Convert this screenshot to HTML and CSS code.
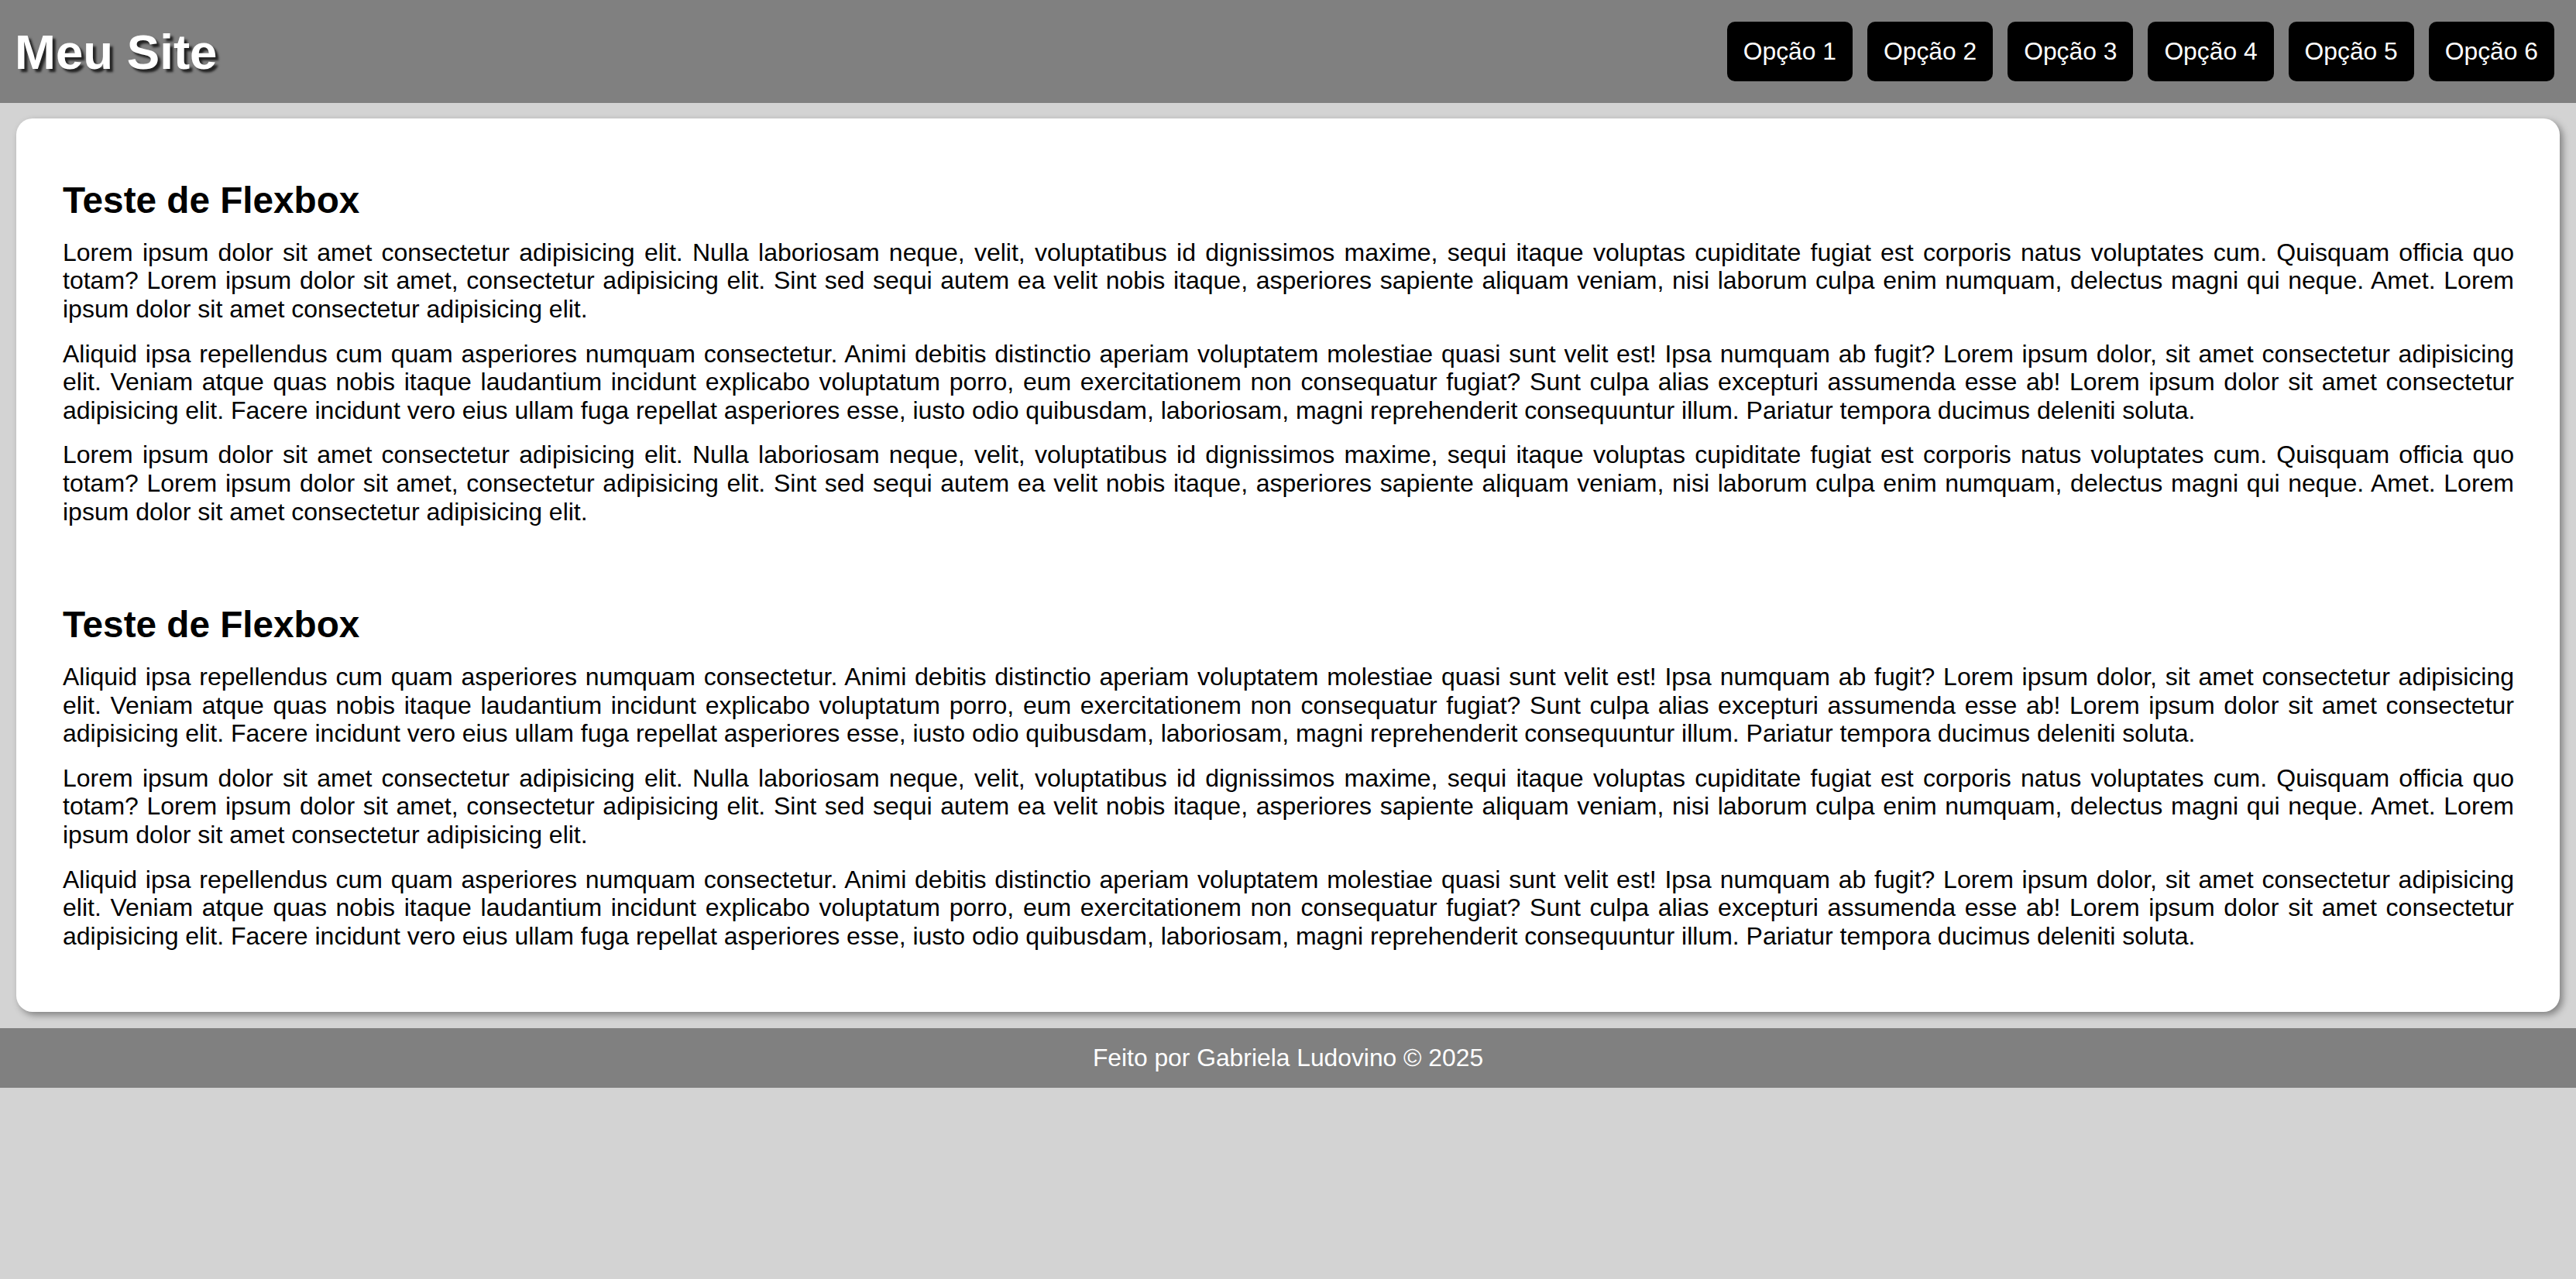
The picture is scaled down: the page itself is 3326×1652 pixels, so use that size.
FILE: index.html
```html
<!DOCTYPE html>
<html lang="pt-BR">
<head>
<meta charset="utf-8">
<title>Meu Site</title>
<link rel="stylesheet" href="styles.css">
</head>
<body>
<header class="topbar">
  <h1 class="logo">Meu Site</h1>
  <nav class="menu">
    <a class="menu-item" href="#">Opção 1</a>
    <a class="menu-item" href="#">Opção 2</a>
    <a class="menu-item" href="#">Opção 3</a>
    <a class="menu-item" href="#">Opção 4</a>
    <a class="menu-item" href="#">Opção 5</a>
    <a class="menu-item" href="#">Opção 6</a>
  </nav>
</header>
<main class="card">
  <section class="block">
    <h2 class="block-title">Teste de Flexbox</h2>
    <p class="text">Lorem ipsum dolor sit amet consectetur adipisicing elit. Nulla laboriosam neque, velit, voluptatibus id dignissimos maxime, sequi itaque voluptas cupiditate fugiat est corporis natus voluptates cum. Quisquam officia quo totam? Lorem ipsum dolor sit amet, consectetur adipisicing elit. Sint sed sequi autem ea velit nobis itaque, asperiores sapiente aliquam veniam, nisi laborum culpa enim numquam, delectus magni qui neque. Amet. Lorem ipsum dolor sit amet consectetur adipisicing elit.</p>
    <p class="text">Aliquid ipsa repellendus cum quam asperiores numquam consectetur. Animi debitis distinctio aperiam voluptatem molestiae quasi sunt velit est! Ipsa numquam ab fugit? Lorem ipsum dolor, sit amet consectetur adipisicing elit. Veniam atque quas nobis itaque laudantium incidunt explicabo voluptatum porro, eum exercitationem non consequatur fugiat? Sunt culpa alias excepturi assumenda esse ab! Lorem ipsum dolor sit amet consectetur adipisicing elit. Facere incidunt vero eius ullam fuga repellat asperiores esse, iusto odio quibusdam, laboriosam, magni reprehenderit consequuntur illum. Pariatur tempora ducimus deleniti soluta.</p>
    <p class="text">Lorem ipsum dolor sit amet consectetur adipisicing elit. Nulla laboriosam neque, velit, voluptatibus id dignissimos maxime, sequi itaque voluptas cupiditate fugiat est corporis natus voluptates cum. Quisquam officia quo totam? Lorem ipsum dolor sit amet, consectetur adipisicing elit. Sint sed sequi autem ea velit nobis itaque, asperiores sapiente aliquam veniam, nisi laborum culpa enim numquam, delectus magni qui neque. Amet. Lorem ipsum dolor sit amet consectetur adipisicing elit.</p>
  </section>
  <section class="block">
    <h2 class="block-title">Teste de Flexbox</h2>
    <p class="text">Aliquid ipsa repellendus cum quam asperiores numquam consectetur. Animi debitis distinctio aperiam voluptatem molestiae quasi sunt velit est! Ipsa numquam ab fugit? Lorem ipsum dolor, sit amet consectetur adipisicing elit. Veniam atque quas nobis itaque laudantium incidunt explicabo voluptatum porro, eum exercitationem non consequatur fugiat? Sunt culpa alias excepturi assumenda esse ab! Lorem ipsum dolor sit amet consectetur adipisicing elit. Facere incidunt vero eius ullam fuga repellat asperiores esse, iusto odio quibusdam, laboriosam, magni reprehenderit consequuntur illum. Pariatur tempora ducimus deleniti soluta.</p>
    <p class="text">Lorem ipsum dolor sit amet consectetur adipisicing elit. Nulla laboriosam neque, velit, voluptatibus id dignissimos maxime, sequi itaque voluptas cupiditate fugiat est corporis natus voluptates cum. Quisquam officia quo totam? Lorem ipsum dolor sit amet, consectetur adipisicing elit. Sint sed sequi autem ea velit nobis itaque, asperiores sapiente aliquam veniam, nisi laborum culpa enim numquam, delectus magni qui neque. Amet. Lorem ipsum dolor sit amet consectetur adipisicing elit.</p>
    <p class="text">Aliquid ipsa repellendus cum quam asperiores numquam consectetur. Animi debitis distinctio aperiam voluptatem molestiae quasi sunt velit est! Ipsa numquam ab fugit? Lorem ipsum dolor, sit amet consectetur adipisicing elit. Veniam atque quas nobis itaque laudantium incidunt explicabo voluptatum porro, eum exercitationem non consequatur fugiat? Sunt culpa alias excepturi assumenda esse ab! Lorem ipsum dolor sit amet consectetur adipisicing elit. Facere incidunt vero eius ullam fuga repellat asperiores esse, iusto odio quibusdam, laboriosam, magni reprehenderit consequuntur illum. Pariatur tempora ducimus deleniti soluta.</p>
  </section>
</main>
<footer class="footer">Feito por Gabriela Ludovino © 2025</footer>
</body>
</html>
```

FILE: styles.css
```css
html, body {
  margin: 0;
  padding: 0;
}

body {
  background: #d3d3d3;
  font-family: "Liberation Sans", Arial, Helvetica, sans-serif;
  font-size: 31.8px;
  color: #000;
  min-height: 1652px;
}

.topbar {
  display: flex;
  align-items: center;
  justify-content: space-between;
  height: 133px;
  box-sizing: border-box;
  padding: 0 28px 0 19px;
  background: #808080;
}

.logo {
  margin: 0;
  font-size: 63.6px;
  font-weight: bold;
  line-height: 1.149;
  color: #fff;
  text-shadow: 4px 4px 3px #222;
}

.menu {
  display: flex;
  gap: 19px;
}

.menu-item {
  display: block;
  padding: 20px 21px;
  background: #000;
  color: #fff;
  text-decoration: none;
  border-radius: 10px;
  font-size: 31.8px;
  line-height: 36.6px;
}

.card {
  display: flex;
  flex-direction: column;
  gap: 101px;
  margin: 20px 21px 21px 21px;
  padding: 79px 59px 80px 60px;
  background: #fff;
  border-radius: 21px;
  box-shadow: 4px 4px 10px #808080;
}

.block-title {
  margin: 0;
  font-size: 47.7px;
  font-weight: bold;
  line-height: 54.8px;
}

.text {
  margin: 21px 0 0 0;
  font-size: 32px;
  line-height: 36.6px;
  text-align: justify;
}

.footer {
  padding: 20px 0;
  background: #808080;
  color: #fff;
  text-align: center;
  font-size: 31.8px;
  line-height: 36.6px;
}
```
